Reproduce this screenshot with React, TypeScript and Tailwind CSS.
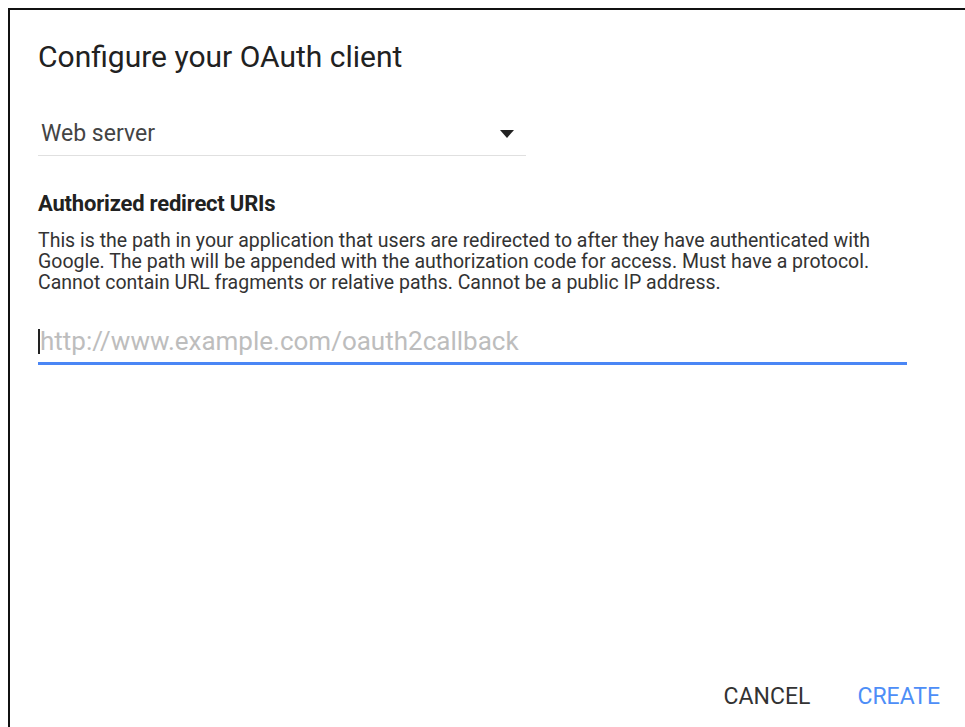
export default function App() {
  return (
    <div className="h-[727px] w-[965px] overflow-hidden bg-white pl-2 pt-2" style={{ fontFamily: "Roboto, 'Liberation Sans', sans-serif" }}>
      <div className="flex h-full flex-col border-l-2 border-t-2 border-[#111] bg-white pl-[28px] pr-[25px]">
        <h1 className="mt-[31px] text-[30px] leading-[32px] text-[#212121]">Configure your OAuth client</h1>

        {/* application type select */}
        <div className="mt-[38px] flex h-[45px] w-[488px] items-center justify-between border-b border-[#e0e0e0] pl-[3px] pr-[12px] pt-[2px]">
          <span className="text-[23px] leading-[28px] text-[#444]">Web server</span>
          <svg width="14" height="8" viewBox="0 0 14 8"><path d="M0 0h14L7 8z" fill="#222" /></svg>
        </div>

        <div className="mt-[36px] text-[22px] font-bold leading-[24px] tracking-[-0.2px] text-[#212121]">Authorized redirect URIs</div>
        <p className="mt-[14px] w-[865px] text-[19.5px] leading-[21px] text-[#333]">
          This is the path in your application that users are redirected to after they have authenticated with Google. The path will be appended with the authorization code for access. Must have a protocol. Cannot contain URL fragments or relative paths. Cannot be a public IP address.
        </p>

        <div className="mt-[27px] flex h-[45px] w-[869px] items-center border-b-[3px] border-[#4a86f5]">
          <span className="h-[25px] w-[2px] bg-[#222]" />
          <span className="text-[26px] leading-[30px] text-[#bdbdbd]">http://www.example.com/oauth2callback</span>
        </div>

        <div className="mt-auto mb-[16px] flex justify-end gap-[47px]">
          <button className="text-[23px] leading-[28px] text-[#333]">CANCEL</button>
          <button className="text-[23px] leading-[28px] text-[#4d8ef7]">CREATE</button>
        </div>
      </div>
    </div>
  );
}
